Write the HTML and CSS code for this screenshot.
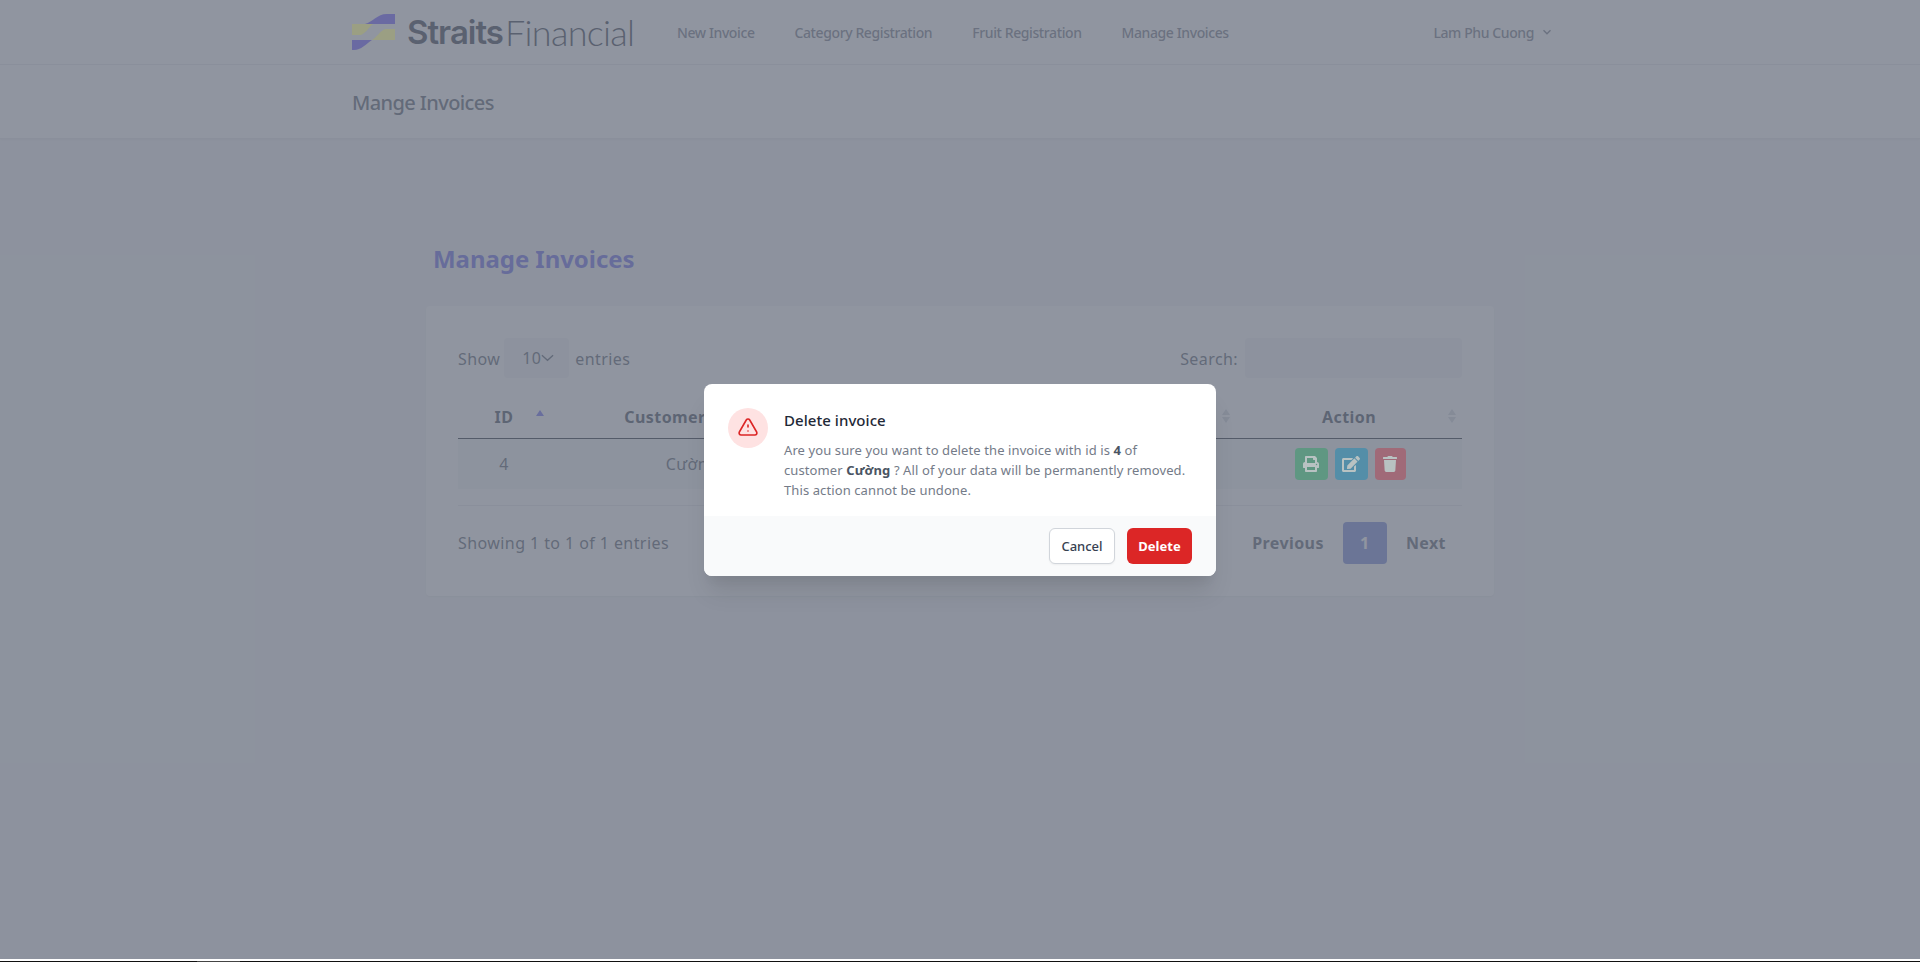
FILE: index.html
```html
<!DOCTYPE html>
<html lang="en">
<head>
  <meta charset="UTF-8" />
  <meta name="viewport" content="width=device-width, initial-scale=1.0"/>
  <title>Manage Invoices</title>
  <link rel="stylesheet" href="styles.css">
</head>
<body>

<div class="page">
  <header class="topbar">
    <div class="wrap topbar-row">
      <a class="logo" href="#">
        <svg class="logo-mark" viewBox="0 0 43 36" width="43" height="36">
          <path fill="#9b9f83" d="M0 10h21c-4 3-7 9-12 11H0z"/>
          <path fill="#6a6aa2" d="M13 10C21 8 25 0 35 0h8v10z"/>
          <path fill="#9b9f83" d="M20 26c5-3 8-9 13-11h10v11z"/>
          <path fill="#6a6aa2" d="M0 26h20C14 30 9 36 2 36H0z"/>
        </svg>
        <span class="logo-bold">Straits</span><span class="logo-thin">Financial</span>
      </a>
      <nav class="main-nav">
        <a href="#">New Invoice</a>
        <a href="#">Category Registration</a>
        <a href="#">Fruit Registration</a>
        <a href="#">Manage Invoices</a>
      </nav>
      <div class="user-menu">
        Lam Phu Cuong
        <svg viewBox="0 0 20 20" width="14" height="14"><path d="M5 7.5l5 5 5-5" fill="none" stroke="currentColor" stroke-width="2"/></svg>
      </div>
    </div>
  </header>

  <div class="subbar">
    <div class="wrap"><h1>Mange Invoices</h1></div>
  </div>

  <main class="content">
    <h2>Manage Invoices</h2>

    <section class="card">
      <div class="controls">
        <label class="ctl">Show
          <span class="select">10<svg viewBox="0 0 14 8" width="13" height="8"><path d="M1 1l6 5.5L13 1" fill="none" stroke="currentColor" stroke-width="1.4"/></svg></span>
          entries</label>
        <label class="ctl">Search: <span class="search"></span></label>
      </div>

      <table class="invoices">
        <colgroup>
          <col class="col-id"><col class="col-customer"><col class="col-total"><col class="col-action">
        </colgroup>
        <thead>
          <tr>
            <th>ID<span class="sort sort-up"></span></th>
            <th>Customer Name<span class="sort"></span></th>
            <th>Total<span class="sort"></span></th>
            <th>Action<span class="sort"></span></th>
          </tr>
        </thead>
        <tbody>
          <tr>
            <td>4</td>
            <td>Cường</td>
            <td></td>
            <td>
              <div class="actions">
                <a class="btn btn-print" href="#"><svg viewBox="0 0 512 512" width="16" height="16"><path fill="currentColor" d="M448 192V77.25c0-8.49-3.37-16.62-9.37-22.63L393.37 9.37c-6-6-14.14-9.37-22.63-9.37H96C78.33 0 64 14.33 64 32v160c-35.35 0-64 28.65-64 64v112c0 8.84 7.16 16 16 16h48v96c0 17.67 14.33 32 32 32h320c17.67 0 32-14.33 32-32v-96h48c8.84 0 16-7.16 16-16V256c0-35.35-28.65-64-64-64zm-64 256H128v-96h256v96zm0-224H128V64h192v48c0 8.84 7.16 16 16 16h48v96zm48 72c-13.25 0-24-10.75-24-24 0-13.26 10.75-24 24-24s24 10.74 24 24c0 13.25-10.75 24-24 24z"/></svg></a>
                <a class="btn btn-edit" href="#"><svg viewBox="0 0 576 512" width="18" height="16"><path fill="currentColor" d="M402.6 83.2l90.2 90.2c3.8 3.8 3.8 10 0 13.8L274.4 405.6l-92.8 10.3c-12.4 1.4-22.9-9.1-21.5-21.5l10.3-92.8L388.8 83.2c3.8-3.8 10-3.8 13.8 0zm162-22.9l-48.8-48.8c-15.2-15.2-39.9-15.2-55.2 0l-35.4 35.4c-3.8 3.8-3.8 10 0 13.8l90.2 90.2c3.8 3.8 10 3.8 13.8 0l35.4-35.4c15.2-15.3 15.2-40 0-55.2zM384 346.2V448H64V128h229.8c3.2 0 6.2-1.3 8.5-3.5l40-40c7.6-7.6 2.2-20.5-8.5-20.5H48C21.5 64 0 85.5 0 112v352c0 26.5 21.5 48 48 48h352c26.5 0 48-21.5 48-48V306.2c0-10.7-12.9-16-20.5-8.5l-40 40c-2.2 2.3-3.5 5.3-3.5 8.5z"/></svg></a>
                <a class="btn btn-trash" href="#"><svg viewBox="0 0 448 512" width="14" height="16"><path fill="currentColor" d="M432 32H312l-9.4-18.7A24 24 0 0 0 281.1 0H166.8a23.72 23.72 0 0 0-21.4 13.3L136 32H16A16 16 0 0 0 0 48v32a16 16 0 0 0 16 16h416a16 16 0 0 0 16-16V48a16 16 0 0 0-16-16zM53.2 467a48 48 0 0 0 47.9 45h245.8a48 48 0 0 0 47.9-45L416 128H32z"/></svg></a>
              </div>
            </td>
          </tr>
        </tbody>
      </table>

      <div class="table-foot">
        <div class="info">Showing 1 to 1 of 1 entries</div>
        <div class="pager">
          <a href="#">Previous</a>
          <a class="current" href="#">1</a>
          <a href="#">Next</a>
        </div>
      </div>
    </section>
  </main>

  <div class="overlay">
    <div class="modal">
      <div class="modal-body">
        <div class="modal-icon">
          <svg viewBox="0 0 24 24" width="24" height="24" fill="none" stroke="#dc2626" stroke-width="1.6" stroke-linecap="round" stroke-linejoin="round"><path d="M12 9v2m0 4h.01m-6.938 4h13.856c1.54 0 2.502-1.667 1.732-3L13.732 4c-.77-1.333-2.694-1.333-3.464 0L3.34 16c-.77 1.333.192 3 1.732 3z"/></svg>
        </div>
        <div class="modal-text">
          <h3>Delete invoice</h3>
          <p>Are you sure you want to delete the invoice with id is <b>4</b> of customer <b>Cường</b> ? All of your data will be permanently removed. This action cannot be undone.</p>
        </div>
      </div>
      <div class="modal-foot">
        <button class="btn-cancel">Cancel</button>
        <button class="btn-delete">Delete</button>
      </div>
    </div>
  </div>
</div>

<div class="bottom-edge"></div>
<div class="screen-tab"></div>

</body>
</html>
```

FILE: styles.css
```css
* { box-sizing: border-box; }
html, body { margin: 0; padding: 0; }
body { font-family: 'Noto Sans', 'Open Sans', Arial, sans-serif; background: #111; color: #374151; overflow: hidden; height: 962px; }
a { color: inherit; text-decoration: none; }

.page { position: relative; height: 959px; background: #f3f4f6; overflow: hidden; }
.wrap { width: 1216px; margin: 0 auto; }

/* header */
.topbar { background: #fff; height: 65px; border-bottom: 1px solid #e5e7eb; }
.topbar-row { display: flex; align-items: center; height: 64px; }
.logo { display: flex; align-items: center; width: 325px; color: #2b3140; }
.logo-mark { position: relative; z-index: 2; margin-right: 12px; flex: none; }
.logo-bold { font-family: Inter, sans-serif; font-weight: 600; font-size: 33px; letter-spacing: -1px; margin-right: 2px; }
.logo-thin { font-family: Lato, sans-serif; font-weight: 300; font-size: 36px; letter-spacing: -0.7px; }
.main-nav { display: flex; gap: 40px; font-size: 14px; font-weight: 500; color: #6b7280; letter-spacing: -0.4px; }
.user-menu { margin-left: auto; margin-right: 14px; display: flex; align-items: center; gap: 6px; font-size: 14px; font-weight: 500; color: #6b7280; letter-spacing: -0.4px; }

.subbar { background: #fff; height: 74px; display: flex; align-items: center; border-bottom: 1px solid #e5e7eb; box-shadow: 0 1px 2px rgba(0,0,0,0.05); }
.subbar .wrap { padding-top: 3px; }
h1 { margin: 0; font-size: 20px; line-height: 28px; font-weight: 500; color: #4b5563; letter-spacing: -0.6px; }

/* content */
.content { width: 1068px; margin: 0 auto; padding-top: 106px; }
h2 { margin: 0 0 33px 7px; font-size: 24px; line-height: 28px; font-weight: 700; color: #5b5ee8; letter-spacing: -0.05px; }
.card { background: #fff; height: 290px; border-radius: 4px; padding: 32px 32px 0; box-shadow: 0 1px 2px rgba(0,0,0,0.06); letter-spacing: 0.42px; color: #4b5563; font-size: 16px; }

.controls { display: flex; justify-content: space-between; align-items: center; height: 40px; }
.ctl { display: flex; align-items: center; gap: 4px; padding-top: 2px; color: #4b5563; }
.select { display: flex; align-items: center; justify-content: flex-end; width: 65px; height: 40px; margin-top: -2px; margin-right: 2px; padding-right: 15px; background: #f1f3f6; border-radius: 4px; }
.search { width: 217px; height: 40px; margin-top: -2px; margin-left: 3px; background: #f1f3f6; border-radius: 4px; }

.invoices { width: 100%; table-layout: fixed; border-collapse: collapse; margin-top: 22px; }
.col-id { width: 92px; }
.col-customer { width: 284px; }
.col-action { width: 226px; }
.invoices th { position: relative; height: 38px; text-align: center; font-weight: 700; color: #374151; border-bottom: 1px solid #111827; padding: 0 0 4px; }
.invoices td { height: 51px; text-align: center; background: #f4f5f7; padding: 0; }

.sort { position: absolute; right: 6px; top: 9px; width: 8px; height: 16px; }
.sort::before, .sort::after { content: ""; position: absolute; left: 0; border-left: 4px solid transparent; border-right: 4px solid transparent; }
.sort::before { top: 0; border-bottom: 6px solid #d1d5db; }
.sort::after { top: 8px; border-top: 6px solid #d1d5db; }
.sort-up { top: 10px; }
.sort-up::before { border-bottom-color: #6366f1; }
.sort-up::after { display: none; }

.actions { display: flex; justify-content: center; gap: 7px; padding-left: 2px; }
.btn { position: relative; z-index: 2; display: flex; align-items: center; justify-content: center; width: 33px; height: 32px; border-radius: 4px; color: #b8c2c2; }
.btn-print { background: #5f9782; }
.btn-edit { background: #548ea8; }
.btn-trash { width: 31px; background: #a06a78; }

.table-foot { display: flex; justify-content: space-between; align-items: center; margin-top: 16px; padding-top: 16px; border-top: 1px solid #e5e7eb; }
.pager { display: flex; align-items: center; gap: 19px; font-weight: 700; padding-right: 16px; color: #4b5563; }
.pager .current { display: flex; align-items: center; justify-content: center; width: 44px; height: 42px; border-radius: 4px; background: #6b7fd7; color: #fff; }

/* confirm dialog */
.overlay { position: absolute; inset: 0; background: rgba(107,114,128,0.75); }
.modal { position: absolute; z-index: 3; left: 704px; top: 384px; width: 512px; height: 192px; border-radius: 8px; background: #fff; overflow: hidden; box-shadow: 0 20px 25px -5px rgba(0,0,0,0.1), 0 10px 10px -5px rgba(0,0,0,0.04); }
.modal-body { display: flex; height: 132px; padding: 24px 24px 16px; gap: 16px; }
.modal-icon { flex: none; display: flex; align-items: center; justify-content: center; width: 40px; height: 40px; border-radius: 50%; background: #fee2e2; }
.modal-text { flex: 1; }
h3 { margin: 0 0 8px; font-size: 15px; line-height: 24px; font-weight: 500; color: #1f2937; letter-spacing: 0.05px; }
.modal-text p { margin: 0; font-size: 13px; line-height: 20px; color: #747b88; letter-spacing: 0.1px; }
.modal-text b { font-weight: 700; color: #4b5563; }
.modal-foot { display: flex; justify-content: flex-end; gap: 12px; height: 60px; padding: 12px 24px; background: #f9fafb; }
.modal-foot button { font-family: inherit; font-size: 13px; font-weight: 500; height: 36px; width: 66px; border-radius: 6px; padding: 0; }
.btn-cancel { background: #fff; color: #374151; border: 1px solid #d1d5db; box-shadow: 0 1px 2px rgba(0,0,0,0.05); }
.modal-foot .btn-delete { width: 65px; background: #dc2626; color: #fff; border: none; font-weight: 700; }

.bottom-edge { height: 2px; background: #fff; }
.screen-tab { width: 43px; height: 1px; margin-left: 197px; background: #444; }
```
